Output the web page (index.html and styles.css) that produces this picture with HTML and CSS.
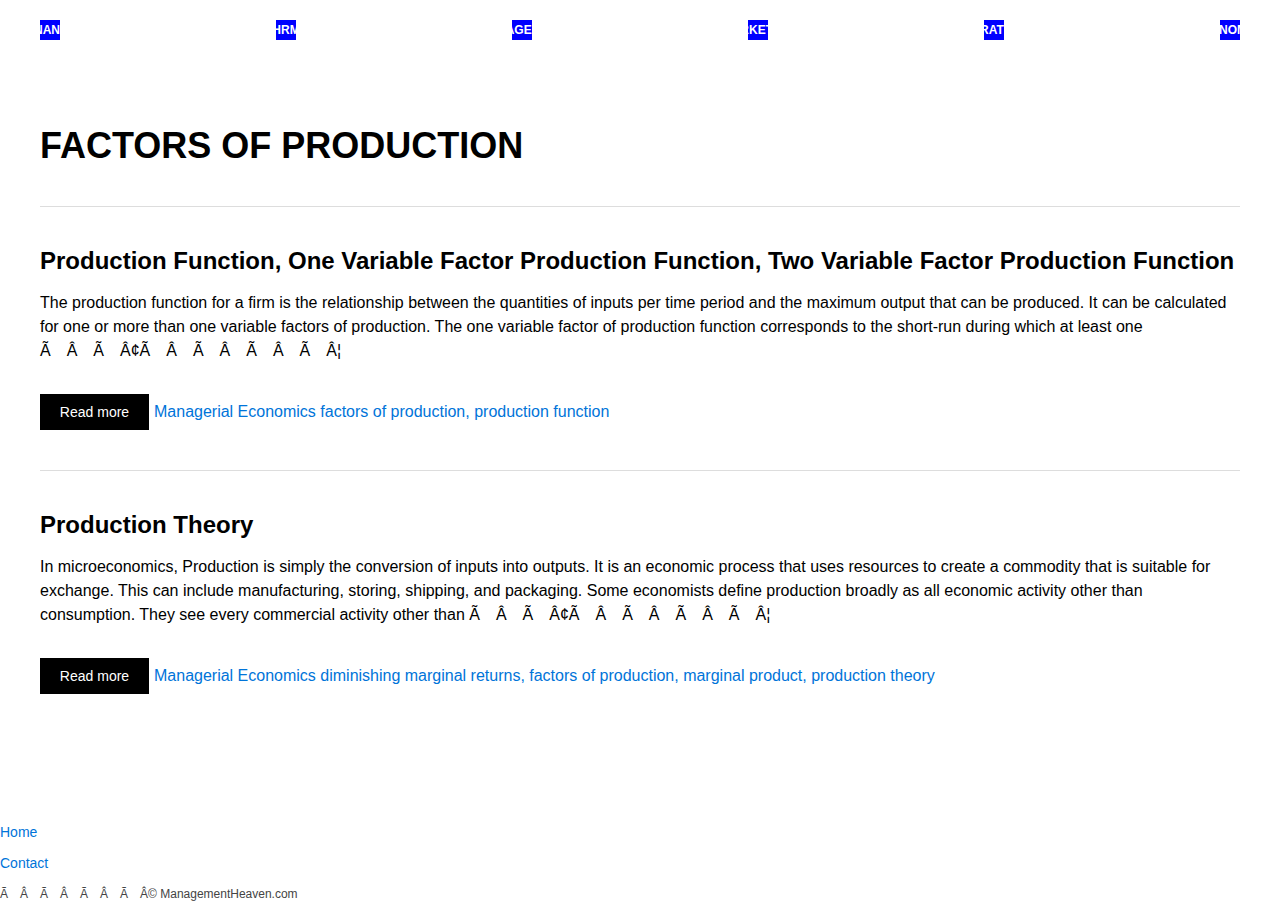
FILE: index.html
```html
<!DOCTYPE html>
<html lang="en">
<head>
<meta charset="utf-8">
<title>Factors of Production</title>
<link rel="stylesheet" href="styles.css">
</head>
<body>
<header class="site-nav">
  <nav class="nav-list">
    <a class="nav-item" href="#"><span>FINANCE</span></a>
    <a class="nav-item" href="#"><span>HRM</span></a>
    <a class="nav-item" href="#"><span>MANAGEMENT</span></a>
    <a class="nav-item" href="#"><span>MARKETING</span></a>
    <a class="nav-item" href="#"><span>OPERATIONS</span></a>
    <a class="nav-item" href="#"><span>ECONOMICS</span></a>
  </nav>
</header>
<main class="content">
  <h1 class="page-title">FACTORS OF PRODUCTION</h1>
  <article class="post">
    <h2 class="post-title">Production Function, One Variable Factor Production Function, Two Variable Factor Production Function</h2>
    <p class="post-excerpt">The production function for a firm is the relationship between the quantities of inputs per time period and the maximum output that can be produced. It can be calculated for one or more than one variable factors of production. The one variable factor of production function corresponds to the short-run during which at least one <span class="moji">Ã&#8195;Â&#8195;Ã&#8195;Â¢Ã&#8195;Â&#8195;Ã&#8195;Â&#8195;Ã&#8195;Â&#8195;Ã&#8195;Â¦</span></p>
    <div class="post-meta">
      <a class="read-more" href="#">Read more</a>
      <a class="post-tags" href="#">Managerial Economics factors of production, production function</a>
    </div>
  </article>
  <article class="post">
    <h2 class="post-title">Production Theory</h2>
    <p class="post-excerpt">In microeconomics, Production is simply the conversion of inputs into outputs. It is an economic process that uses resources to create a commodity that is suitable for exchange. This can include manufacturing, storing, shipping, and packaging. Some economists define production broadly as all economic activity other than consumption. They see every commercial activity other than <span class="moji">Ã&#8195;Â&#8195;Ã&#8195;Â¢Ã&#8195;Â&#8195;Ã&#8195;Â&#8195;Ã&#8195;Â&#8195;Ã&#8195;Â¦</span></p>
    <div class="post-meta">
      <a class="read-more" href="#">Read more</a>
      <a class="post-tags" href="#">Managerial Economics diminishing marginal returns, factors of production, marginal product, production theory</a>
    </div>
  </article>
</main>
<footer class="site-footer">
  <ul class="footer-links">
    <li><a href="#">Home</a></li>
    <li><a href="#">Contact</a></li>
  </ul>
  <p class="copyright"><span class="moji">Ã&#8195;Â&#8195;Ã&#8195;Â&#8195;Ã&#8195;Â&#8195;Ã&#8195;Â©</span> ManagementHeaven.com</p>
</footer>
</body>
</html>
```
FILE: styles.css
```css
html, body {
  margin: 0;
  padding: 0;
  background: #fff;
}

body {
  font-family: "Liberation Sans", Arial, sans-serif;
  color: #000;
  font-size: 16px;
}

a {
  text-decoration: none;
}

.site-nav {
  padding: 20px 40px 0;
}

.nav-list {
  display: flex;
  justify-content: space-between;
}

.nav-item {
  display: flex;
  justify-content: center;
  width: 20px;
  height: 20px;
  overflow: hidden;
  background: #0000ff;
  color: #fff;
  font-weight: bold;
  font-size: 12px;
  line-height: 20px;
  white-space: nowrap;
}

.nav-item span {
  flex-shrink: 0;
}

.content {
  padding: 0 40px;
}

.page-title {
  margin: 83px 0 37px;
  font-size: 36px;
  line-height: 46px;
  font-weight: bold;
}

.post {
  border-top: 1px solid #ddd;
  padding: 40px 0 40px;
}

.post-title {
  margin: 0 0 16px;
  font-size: 24px;
  line-height: 28px;
  font-weight: bold;
}

.post-excerpt {
  margin: 0 0 31px;
  line-height: 24px;
}

.moji {
  white-space: nowrap;
}

.post-meta {
  display: flex;
  align-items: center;
  gap: 5px;
}

.read-more {
  display: flex;
  align-items: center;
  justify-content: center;
  width: 109px;
  height: 36px;
  background: #000;
  color: #fff;
  font-size: 14px;
}

.post-tags {
  color: #0074d9;
  font-size: 16px;
}

.site-footer {
  margin-top: 83px;
}

.footer-links {
  list-style: none;
  margin: 0;
  padding: 0;
}

.footer-links li {
  line-height: 31px;
  font-size: 14px;
}

.footer-links a {
  color: #0074d9;
}

.copyright {
  margin: 0;
  font-size: 12px;
  line-height: 31px;
  color: #444;
}
```
